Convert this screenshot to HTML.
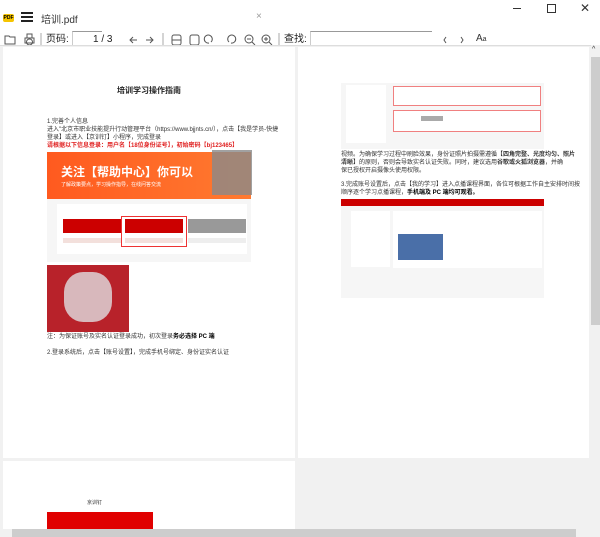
<!DOCTYPE html><html><head><meta charset="utf-8"><style>
*{margin:0;padding:0;box-sizing:border-box}
body{width:600px;height:537px;overflow:hidden;background:#fff;font-family:"Liberation Sans","Noto Sans CJK SC",sans-serif;position:relative}
.a{position:absolute}
.t{font-size:6px;color:#333;white-space:nowrap;line-height:8px}
.ic{stroke:#555;fill:none;stroke-width:1}
.tb{font-size:10px;color:#222;line-height:12px}
</style></head><body>
<!-- title bar -->
<div class="a" style="left:3px;top:14px;width:11px;height:8px;background:#f5c400;border-radius:2px;font-size:5px;font-weight:bold;color:#000;text-align:center;line-height:8px">PDF</div>
<div class="a" style="left:21px;top:12px;width:12px;height:2px;background:#222"></div>
<div class="a" style="left:21px;top:16px;width:12px;height:2px;background:#222"></div>
<div class="a" style="left:21px;top:20px;width:12px;height:2px;background:#222"></div>
<div class="a" style="left:41px;top:11px;font-size:10px;color:#333">培训.pdf</div>
<div class="a" style="left:256px;top:11px;font-size:10px;color:#999">×</div>
<div class="a" style="left:513px;top:8px;width:8px;height:1px;background:#333"></div>
<div class="a" style="left:547px;top:4px;width:9px;height:9px;border:1px solid #333"></div>
<div class="a" style="left:580px;top:1px;font-size:12px;color:#333">✕</div>
<!-- toolbar -->
<svg class="a" style="left:0;top:30px" width="600" height="20">
<path class="ic" d="M5 6h4l1 1h5v7H5z"/>
<rect class="ic" x="25" y="8" width="9" height="5"/><rect class="ic" x="27" y="4" width="5" height="4"/><circle class="ic" cx="29.5" cy="12" r="3"/>
<line x1="41" y1="3" x2="41" y2="17" stroke="#aaa"/>
<path class="ic" d="M137 10h-7M133 7l-3 3 3 3"/><path class="ic" d="M146 10h7M150 7l3 3-3 3"/>
<line x1="163" y1="3" x2="163" y2="17" stroke="#aaa"/>
<rect class="ic" x="172" y="5" width="9" height="10" rx="2"/><line class="ic" x1="172" y1="10" x2="181" y2="10"/>
<rect class="ic" x="190" y="5" width="9" height="10" rx="2"/>
<path class="ic" d="M209 13a4 4 0 1 1 2-1" stroke="#999"/><path class="ic" d="M231 13a4 4 0 1 0-2-1" stroke="#999"/>
<circle class="ic" cx="249" cy="9" r="4"/><path class="ic" d="M252 12l3 3M247 9h4"/>
<circle class="ic" cx="266" cy="9" r="4"/><path class="ic" d="M269 12l3 3M264 9h4M266 7v4"/>
<line x1="279" y1="3" x2="279" y2="17" stroke="#aaa"/>
<path class="ic" d="M446 7l-2 3 2 3"/><path class="ic" d="M461 7l2 3-2 3"/>
</svg>
<div class="a tb" style="left:46px;top:34px">页码:</div>
<div class="a" style="left:72px;top:31px;width:30px;height:14px;border-top:1px solid #999;border-left:1px solid #ccc"></div>
<div class="a tb" style="left:93px;top:34px">1 / 3</div>
<div class="a tb" style="left:284px;top:34px">查找:</div>
<div class="a" style="left:310px;top:31px;width:122px;height:14px;border-top:1px solid #999;border-left:1px solid #ccc"></div>
<div class="a" style="left:476px;top:33px;font-size:10px;color:#333">A<span style="font-size:7px">a</span></div>
<!-- content -->
<div class="a" style="left:0;top:45px;width:591px;height:484px;background:#f1f1f1;border-top:1px solid #ddd"></div>
<div class="a" style="left:3px;top:47px;width:292px;height:411px;background:#fff"></div>
<div class="a" style="left:298px;top:47px;width:291px;height:411px;background:#fff"></div>
<div class="a" style="left:3px;top:461px;width:292px;height:70px;background:#fff"></div>
<!-- page1 -->
<div class="a" style="left:117px;top:85px;font-size:8px;font-weight:bold;color:#222">培训学习操作指南</div>
<div class="a t" style="left:47px;top:118px">1.完善个人信息</div>
<div class="a t" style="left:47px;top:126px">进入"北京市职业技能提升行动管理平台（https://www.bjjnts.cn/），点击【我是学员-快捷</div>
<div class="a t" style="left:47px;top:134px">登录】或进入【京训钉】小程序，完成登录</div>
<div class="a t" style="left:47px;top:142px;color:#e02020;font-weight:bold">请根据以下信息登录：用户名【18位身份证号】，初始密码【bj123465】</div>
<div class="a" style="left:47px;top:152px;width:204px;height:47px;background:linear-gradient(90deg,#ff5a1f,#ff7a30)"></div>
<div class="a" style="left:61px;top:163px;font-size:12px;font-weight:bold;color:#fff">关注【帮助中心】你可以</div>
<div class="a" style="left:61px;top:181px;font-size:5px;color:#fff">了解政策要点，学习操作指导，在线问答交流</div>
<div class="a" style="left:212px;top:150px;width:40px;height:45px;background:#8a8a8a;opacity:.8"></div>
<div class="a" style="left:47px;top:199px;width:204px;height:63px;background:#f6f6f6"></div>
<div class="a" style="left:57px;top:204px;width:190px;height:50px;background:#fff"></div>
<div class="a" style="left:63px;top:219px;width:58px;height:14px;background:#c00"></div>
<div class="a" style="left:125px;top:219px;width:58px;height:14px;background:#c00"></div>
<div class="a" style="left:188px;top:219px;width:58px;height:14px;background:#999"></div>
<div class="a" style="left:63px;top:238px;width:58px;height:5px;background:#f3e0dc"></div>
<div class="a" style="left:125px;top:238px;width:58px;height:5px;background:#f3e0dc"></div>
<div class="a" style="left:188px;top:238px;width:58px;height:5px;background:#eee"></div>
<div class="a" style="left:121px;top:216px;width:66px;height:31px;border:1px solid #e33"></div>
<div class="a" style="left:47px;top:265px;width:82px;height:67px;background:#b8222a"></div>
<div class="a" style="left:64px;top:272px;width:48px;height:50px;background:#d8b8bc;border-radius:40%"></div>
<div class="a t" style="left:47px;top:333px">注：为保证账号及实名认证登录成功，初次登录<b style="color:#000">务必选择 PC 端</b></div>
<div class="a t" style="left:47px;top:349px">2.登录系统后，点击【账号设置】，完成手机号绑定、身份证实名认证</div>
<!-- page2 -->
<div class="a" style="left:341px;top:83px;width:203px;height:66px;background:#f6f6f6"></div>
<div class="a" style="left:346px;top:85px;width:40px;height:58px;background:#fff"></div>
<div class="a" style="left:393px;top:86px;width:148px;height:20px;background:#fff;border:1px solid #f08080"></div>
<div class="a" style="left:393px;top:110px;width:148px;height:22px;background:#fff;border:1px solid #f08080"></div>
<div class="a" style="left:421px;top:116px;width:22px;height:5px;background:#aaa"></div>
<div class="a t" style="left:341px;top:151px">视频。为确保学习过程中刷脸效果，身份证照片拍摄需遵循<b>【四角完整、光度均匀、照片</b></div>
<div class="a t" style="left:341px;top:159px"><b>清晰】</b>的原则，否则会导致实名认证失败。同时，建议选用<b>谷歌或火狐浏览器</b>，并确</div>
<div class="a t" style="left:341px;top:167px">保已授权开启摄像头使用权限。</div>
<div class="a t" style="left:341px;top:181px">3.完成账号设置后，点击【我的学习】进入点播课程界面，各位可根据工作自主安排时间按</div>
<div class="a t" style="left:341px;top:189px">顺序逐个学习点播课程，<b style="color:#000">手机端及 PC 端均可观看。</b></div>
<div class="a" style="left:341px;top:199px;width:203px;height:7px;background:#c00"></div>
<div class="a" style="left:341px;top:206px;width:203px;height:92px;background:#f6f6f6"></div>
<div class="a" style="left:351px;top:211px;width:39px;height:56px;background:#fff"></div>
<div class="a" style="left:393px;top:211px;width:149px;height:57px;background:#fff"></div>
<div class="a" style="left:398px;top:234px;width:45px;height:26px;background:#4a6fa8"></div>
<!-- page3 -->
<div class="a" style="left:87px;top:499px;font-size:5px;color:#333">京训钉</div>
<div class="a" style="left:47px;top:512px;width:106px;height:17px;background:#e00000"></div>
<!-- scrollbars -->
<div class="a" style="left:591px;top:45px;width:9px;height:484px;background:#f1f1f1"></div>
<div class="a" style="left:591px;top:57px;width:9px;height:268px;background:#cdcdcd"></div>
<div class="a" style="left:592px;top:46px;font-size:7px;color:#333">^</div>
<div class="a" style="left:0;top:529px;width:600px;height:8px;background:#f1f1f1"></div>
<div class="a" style="left:12px;top:529px;width:564px;height:8px;background:#cdcdcd"></div>
</body></html>
